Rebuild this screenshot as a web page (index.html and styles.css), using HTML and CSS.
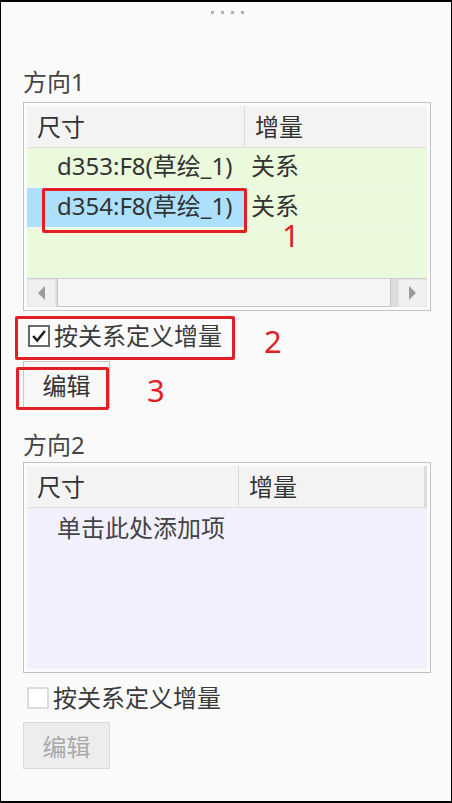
FILE: index.html
```html
<!DOCTYPE html>
<html lang="zh-CN">
<head>
<meta charset="utf-8">
<link rel="stylesheet" href="styles.css">
</head>
<body>
<div class="panel">
  <div class="grip"><span></span><span></span><span></span><span></span></div>

  <div class="group-title first">方向1</div>
  <div class="table">
    <div class="thead">
      <div class="th col1">尺寸</div>
      <div class="th col2">增量</div>
    </div>
    <div class="tbody green">
      <div class="row">
        <div class="td col1 name"><span>d353:F8(草绘_1)</span></div>
        <div class="td col2 val"><span>关系</span></div>
      </div>
      <div class="row">
        <div class="td col1 name selected"><span>d354:F8(草绘_1)</span></div>
        <div class="td col2 val"><span>关系</span></div>
      </div>
      <div class="filler"></div>
      <div class="hscroll">
        <div class="sbtn"><span class="arrow left"></span></div>
        <div class="thumb"></div>
        <div class="sbtn"><span class="arrow right"></span></div>
      </div>
    </div>
  </div>
  <label class="check-row">
    <span class="box checked"><svg viewBox="0 0 20 20" width="20" height="20"><polyline points="3.5,10 8,15 16.5,4.5" fill="none" stroke="#1e1e1e" stroke-width="2.8"/></svg></span>
    <span class="check-text">按关系定义增量</span>
  </label>
  <button class="btn">编辑</button>

  <div class="group-title second">方向2</div>
  <div class="table t2">
    <div class="thead">
      <div class="th col1 narrow">尺寸</div>
      <div class="th col2 edge">增量</div>
    </div>
    <div class="tbody lavender">
      <div class="placeholder">单击此处添加项</div>
    </div>
  </div>
  <label class="check-row second-row">
    <span class="box empty"></span>
    <span class="check-text">按关系定义增量</span>
  </label>
  <button class="btn disabled" disabled>编辑</button>

  <div class="mark m1"></div>
  <div class="mark m2"></div>
  <div class="mark m3"></div>
  <div class="num n1">1</div>
  <div class="num n2">2</div>
  <div class="num n3">3</div>
</div>
</body>
</html>
```

FILE: styles.css
```css
* { box-sizing: border-box; }
html, body { margin: 0; padding: 0; background: #fafafa; }
body {
  font-family: "Noto Sans", "Noto Sans CJK SC", sans-serif;
  color: #333;
}
.panel {
  position: relative;
  width: 452px;
  height: 803px;
  border: 1px solid #000;
  border-top-width: 2px;
  border-bottom-width: 2px;
  background: #fafafa;
  padding: 0 21px 0 22px;
}
.grip {
  display: flex;
  justify-content: center;
  gap: 7px;
  padding-top: 9px;
  margin-left: -22px;
  margin-right: -21px;
  padding-left: 3px;
}
.grip span {
  width: 3px;
  height: 3px;
  background: #b0b0b0;
}
.group-title {
  font-size: 24px;
  line-height: 34px;
  height: 34px;
  color: #444;
  padding-left: 0;
}
.group-title.first { margin-top: 51px; margin-bottom: 3px; }
.group-title.second { margin-top: 20px; margin-bottom: 0; }

.table {
  width: 408px;
  border: 1px solid #c2c2c2;
  padding: 3px;
  background: #fbfbfb;
}
.thead {
  display: flex;
  height: 42px;
  background: #f3f3f3;
  border-bottom: 1px solid #e2e2e2;
}
.th {
  font-size: 24px;
  line-height: 41px;
  color: #333;
  padding-left: 10px;
}
.col1 { width: 218px; border-right: 1px solid #dadada; }
.col1.narrow { width: 212px; }
.col2 { flex: 1; }
.th.edge { border-right: 3px solid #dcdcdc; }

.tbody.green { background: #ebfadd; }
.row {
  display: flex;
  height: 40px;
  border-bottom: 1px solid #f4f7f0;
}
.td {
  display: flex;
  align-items: center;
  font-size: 24px;
  line-height: 28px;
  padding-bottom: 4px;
  color: #333;
  white-space: nowrap;
}
.td.col1 { border-right: none; padding-left: 30px; }
.td.val { padding-left: 6px; }
.td.selected { background: #ade0fd; }
.filler { height: 50px; }
.hscroll {
  display: flex;
  height: 29px;
  background: #dcdcdc;
  border-top: 1px solid #cfcfcf;
}
.sbtn {
  width: 29px;
  display: flex;
  align-items: center;
  justify-content: center;
  background: #f0f0f0;
  border: 1px solid #e4e4e4;
}
.sbtn:last-child { margin-left: 7px; }
.thumb {
  flex: 1;
  margin-left: 1px;
  background: #f6f6f6;
  border: 1px solid #c6c6c6;
  border-top: none;
}
.arrow {
  width: 0;
  height: 0;
  border-top: 7px solid transparent;
  border-bottom: 7px solid transparent;
}
.arrow.left { border-right: 7px solid #9a9a9a; }
.arrow.right { border-left: 7px solid #9a9a9a; }

.t2 { height: 211px; }
.tbody.lavender { background: #f3f0fe; height: 161px; }
.placeholder {
  font-size: 24px;
  line-height: 40px;
  padding-left: 30px;
  color: #444;
}

.check-row {
  display: flex;
  align-items: center;
  height: 50px;
  padding-left: 5px;
}
.check-row.second-row { height: 49px; padding-left: 4px; }
.box {
  flex: none;
  width: 22px;
  height: 22px;
  display: flex;
  align-items: center;
  justify-content: center;
  background: #fff;
}
.box.checked { border: 2px solid #6a6a6a; }
.box.empty { border: 2px solid #dcdcdc; }
.check-text {
  font-size: 24px;
  color: #3a3a3a;
  margin-left: 4px;
  line-height: 30px;
}
.btn {
  display: block;
  width: 87px;
  height: 47px;
  font-family: inherit;
  font-size: 24px;
  color: #333;
  background: #f8f8f8;
  border: 1px solid #c8c8c8;
  padding: 0;
  margin: 0;
}
.btn.disabled {
  background: #ededed;
  border-color: #dadada;
  color: #aaaaaa;
}

.mark {
  position: absolute;
  border: 3px solid #e31e25;
  border-radius: 2px;
}
.m1 { left: 41px; top: 186px; width: 205px; height: 45px; }
.m2 { left: 14px; top: 314px; width: 220px; height: 44px; }
.m3 { left: 15px; top: 365px; width: 93px; height: 43px; }
.num {
  position: absolute;
  font-family: "Noto Sans", sans-serif;
  font-size: 31px;
  line-height: 22px;
  color: #e31e25;
}
.n1 { left: 281px; top: 222px; }
.n2 { left: 263px; top: 328px; }
.n3 { left: 146px; top: 377px; }
```
